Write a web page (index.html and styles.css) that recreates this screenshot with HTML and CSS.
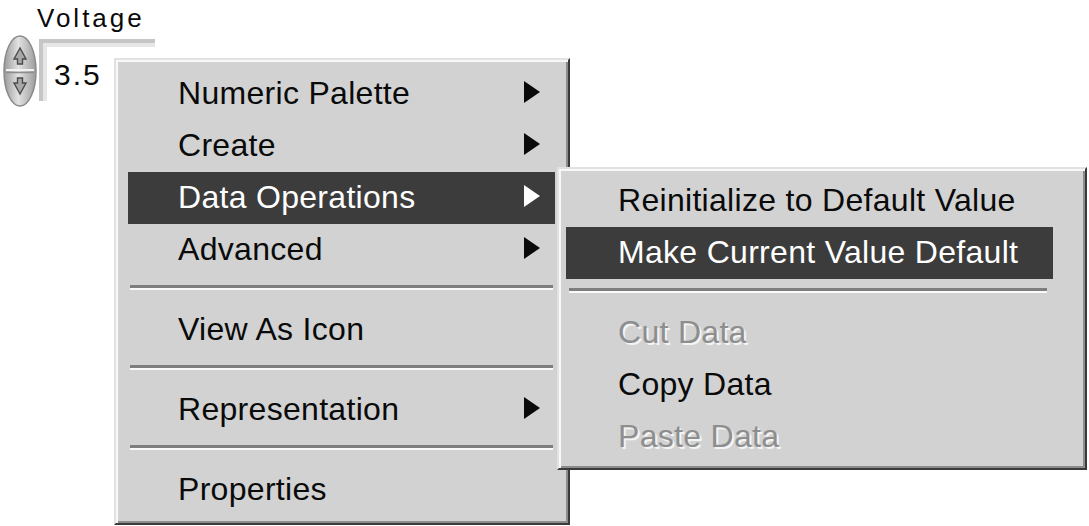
FILE: index.html
```html
<!DOCTYPE html>
<html>
<head>
<meta charset="utf-8">
<link rel="stylesheet" href="styles.css">
</head>
<body>
<div class="canvas">
  <div class="control">
    <div class="label">Voltage</div>
    <div class="ctl-row">
      <svg class="spinner" width="36" height="74" viewBox="0 0 36 74">
        <defs>
          <linearGradient id="sg" x1="0" x2="1" y1="0" y2="0">
            <stop offset="0" stop-color="#9a9a9a"/>
            <stop offset="0.45" stop-color="#e2e2e2"/>
            <stop offset="1" stop-color="#9c9c9c"/>
          </linearGradient>
        </defs>
        <ellipse cx="18" cy="37" rx="16" ry="35" fill="url(#sg)" stroke="#8a8a8a" stroke-width="1.5"/>
        <line x1="4" y1="36" x2="32" y2="36" stroke="#f2f2f2" stroke-width="2"/>
        <line x1="4" y1="38.5" x2="32" y2="38.5" stroke="#8c8c8c" stroke-width="1.5"/>
        <path d="M18 14 L12 25 L15.5 25 L15.5 30 L20.5 30 L20.5 25 L24 25 Z" fill="#a8a8a8" stroke="#4a4a4a" stroke-width="1.4"/>
        <path d="M18 60 L12 49 L15.5 49 L15.5 44 L20.5 44 L20.5 49 L24 49 Z" fill="#a8a8a8" stroke="#4a4a4a" stroke-width="1.4"/>
      </svg>
      <div class="numbox">3.5</div>
    </div>
  </div>

  <div class="menu main-menu">
    <div class="item"><span>Numeric Palette</span><span class="arrow"></span></div>
    <div class="item"><span>Create</span><span class="arrow"></span></div>
    <div class="item active"><span>Data Operations</span><span class="arrow"></span></div>
    <div class="item"><span>Advanced</span><span class="arrow"></span></div>
    <div class="sep"></div>
    <div class="item"><span>View As Icon</span></div>
    <div class="sep"></div>
    <div class="item"><span>Representation</span><span class="arrow"></span></div>
    <div class="sep"></div>
    <div class="item"><span>Properties</span></div>
  </div>

  <div class="menu sub-menu">
    <div class="item"><span>Reinitialize to Default Value</span></div>
    <div class="item active"><span>Make Current Value Default</span></div>
    <div class="sep"></div>
    <div class="item disabled"><span>Cut Data</span></div>
    <div class="item"><span>Copy Data</span></div>
    <div class="item disabled"><span>Paste Data</span></div>
  </div>
</div>
</body>
</html>
```

FILE: styles.css
```css
html, body {
  margin: 0;
  padding: 0;
  background: #ffffff;
}

.canvas {
  position: relative;
  width: 1089px;
  height: 526px;
  overflow: hidden;
  font-family: "Liberation Sans", Arial, sans-serif;
  color: #0a0a0a;
}

.control {
  display: flex;
  flex-direction: column;
  padding-left: 2px;
}

.label {
  margin-left: 35px;
  padding-top: 3px;
  height: 30px;
  line-height: 30px;
  font-size: 26px;
  letter-spacing: 3px;
}

.ctl-row {
  display: flex;
  align-items: flex-start;
  gap: 1px;
}

.spinner {
  margin-top: 1px;
  display: block;
}

.numbox {
  margin-top: 6px;
  width: 116px;
  height: 62px;
  box-sizing: border-box;
  border-top: 4px solid #c6c6c6;
  border-left: 4px solid #c6c6c6;
  box-shadow: inset 4px 4px 0 #e6e6e6;
  background: #ffffff;
  padding: 17px 0 0 11px;
  font-size: 30px;
  line-height: 30px;
  letter-spacing: 2px;
}

.menu {
  position: absolute;
  box-sizing: border-box;
  background: #d2d2d2;
  border: 2px solid;
  border-color: #e2e2e2 #3a3a3a #3a3a3a #e2e2e2;
  box-shadow: inset 2px 2px 0 #f8f8f8, inset -2px -2px 0 #8c8c8c;
  display: flex;
  flex-direction: column;
}

.main-menu {
  left: 114px;
  top: 58px;
  width: 456px;
  padding: 8px 13px 7px 12px;
}

.sub-menu {
  left: 557px;
  top: 167px;
  width: 530px;
  padding: 6px 32px 5px 7px;
}

.item {
  height: 52px;
  box-sizing: border-box;
  padding: 0 15px 2px 50px;
  display: flex;
  align-items: center;
  justify-content: space-between;
  font-size: 32px;
  line-height: 48px;
  letter-spacing: 0.3px;
  white-space: nowrap;
}

.sub-menu .item {
  padding-left: 52px;
}

.item.active {
  background: #3c3c3c;
  color: #ffffff;
}

.item.disabled {
  color: #8e8e8e;
  text-shadow: 2px 2px 0 #f4f4f4;
}

.arrow {
  width: 0;
  height: 0;
  margin-bottom: 2px;
  border-left: 16px solid currentColor;
  border-top: 11px solid transparent;
  border-bottom: 11px solid transparent;
}

.sep {
  height: 28px;
  box-sizing: border-box;
  padding-top: 9px;
  margin: 0 2px;
}

.sep::before {
  content: "";
  display: block;
  border-top: 3px solid #7e7e7e;
  border-bottom: 2px solid #fafafa;
}

.sub-menu .sep {
  margin: 0 6px 0 3px;
}
```
